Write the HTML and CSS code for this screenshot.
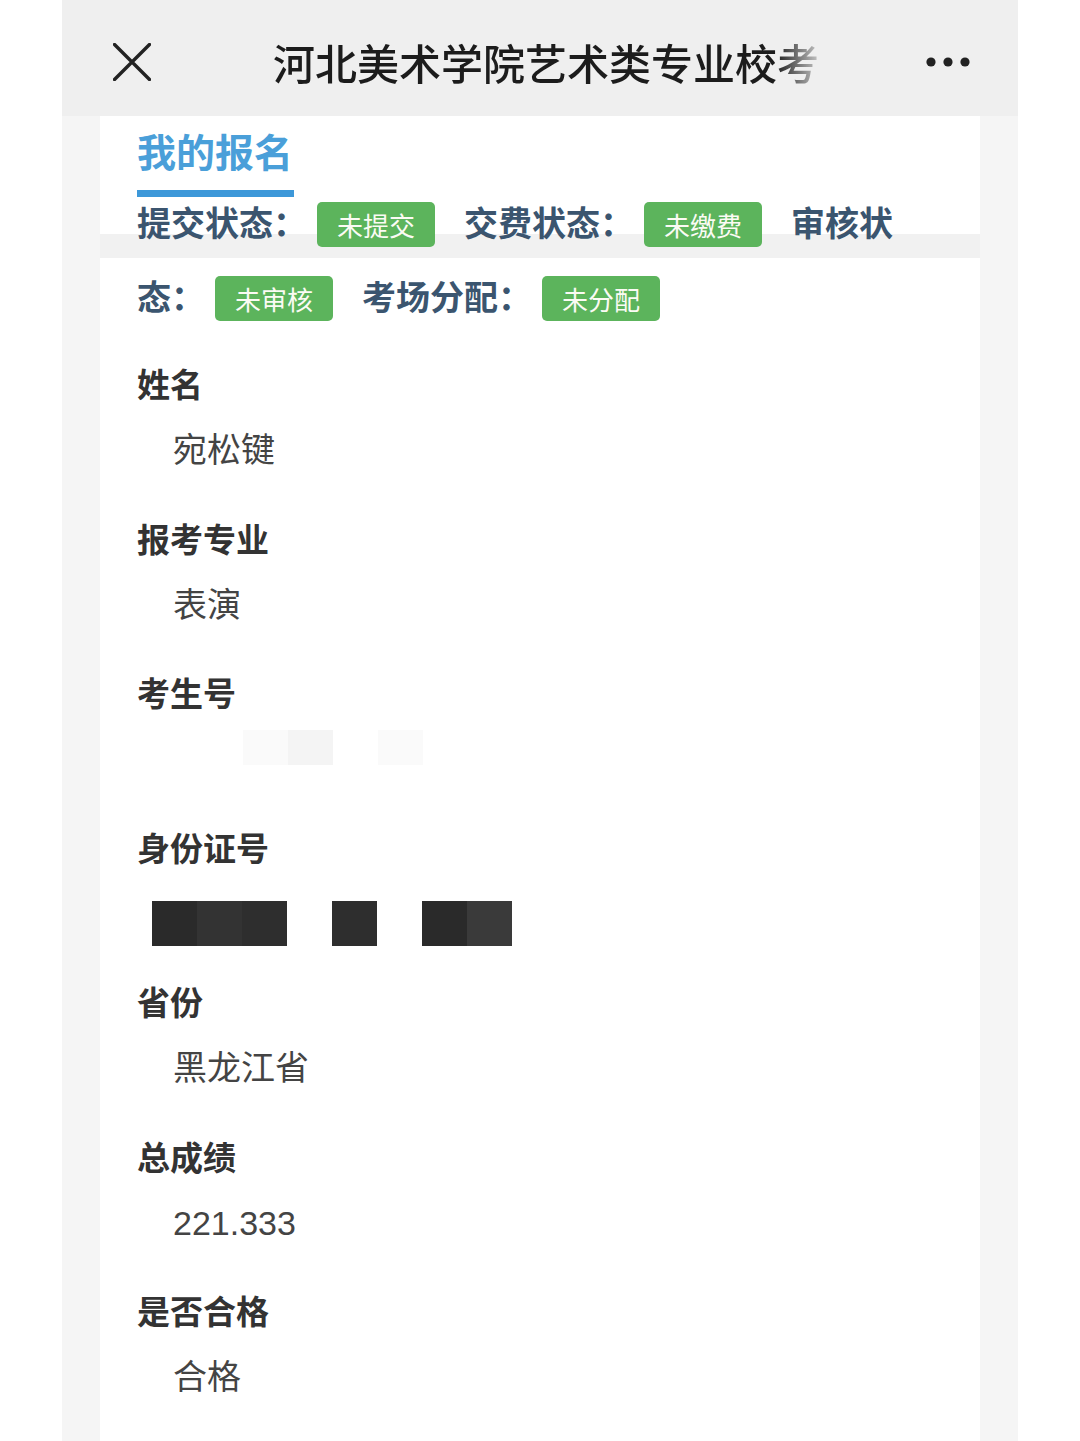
FILE: index.html
```html
<!DOCTYPE html>
<html lang="zh-CN">
<head>
<meta charset="utf-8">
<title>河北美术学院艺术类专业校考</title>
<link rel="stylesheet" href="styles.css">
</head>
<body>
<div class="phone">
  <header class="header">
    <svg class="close" width="38" height="38" viewBox="0 0 38 38" aria-hidden="true">
      <path d="M1.5 1.5 L36.5 36.5 M36.5 1.5 L1.5 36.5" stroke="#222" stroke-width="3.4" stroke-linecap="round" fill="none"/>
    </svg>
    <div class="title">河北美术学院艺术类专业校考</div>
    <svg class="more" width="44" height="10" viewBox="0 0 44 10" aria-hidden="true">
      <circle cx="5" cy="5" r="4.6" fill="#222"/>
      <circle cx="22" cy="5" r="4.6" fill="#222"/>
      <circle cx="39" cy="5" r="4.6" fill="#222"/>
    </svg>
  </header>
  <main class="panel">
    <div class="tab">我的报名</div>
    <div class="status">提交状态：<span class="badge">未提交</span>交费状态：<span class="badge">未缴费</span>审核状态：<span class="badge">未审核</span>考场分配：<span class="badge">未分配</span></div>
    <div class="fields">
      <div class="field">
        <div class="label">姓名</div>
        <div class="value">宛松键</div>
      </div>
      <div class="field">
        <div class="label">报考专业</div>
        <div class="value">表演</div>
      </div>
      <div class="field">
        <div class="label">考生号</div>
        <div class="value blur-row">
          <span class="blk faint1"></span><span class="blk faint2"></span><span class="blk gap"></span><span class="blk faint1"></span>
        </div>
      </div>
      <div class="field">
        <div class="label">身份证号</div>
        <div class="value id-row">
          <span class="sq c1"></span><span class="sq c2"></span><span class="sq c3"></span><span class="sq gap"></span><span class="sq c3"></span><span class="sq gap"></span><span class="sq c1"></span><span class="sq c4"></span>
        </div>
      </div>
      <div class="field">
        <div class="label">省份</div>
        <div class="value">黑龙江省</div>
      </div>
      <div class="field">
        <div class="label">总成绩</div>
        <div class="value">221.333</div>
      </div>
      <div class="field">
        <div class="label">是否合格</div>
        <div class="value">合格</div>
      </div>
    </div>
  </main>
</div>
</body>
</html>
```
FILE: styles.css
```css
* { box-sizing: border-box; }
html, body { margin: 0; padding: 0; }
body {
  background: #ffffff;
  font-family: "Liberation Sans", "Noto Sans CJK SC", sans-serif;
  overflow: hidden;
}
.phone {
  margin: 0 62px;
  width: 956px;
  min-height: 1441px;
  background: #f5f5f5;
}
.header {
  height: 116px;
  background: #efefef;
  display: flex;
  align-items: center;
  padding-top: 7px;
  padding-left: 51px;
  padding-right: 48px;
}
.close { flex: none; display: block; }
.title {
  margin-left: 122px;
  width: 550px;
  font-family: "Noto Sans CJK SC", sans-serif;
  font-size: 42px;
  font-weight: 500;
  color: #1c1c1c;
  line-height: 56px;
  white-space: nowrap;
  overflow: hidden;
  -webkit-mask-image: linear-gradient(to right, #000 0, #000 calc(100% - 48px), rgba(0,0,0,0.12) 100%);
  mask-image: linear-gradient(to right, #000 0, #000 calc(100% - 48px), rgba(0,0,0,0.12) 100%);
}
.more { margin-left: auto; display: block; flex: none; }
.panel {
  margin: 0 38px;
  min-height: 1325px;
  background: linear-gradient(to bottom, #fff 0, #fff 118px, #f1f1f1 118px, #f1f1f1 142px, #fff 142px);
  padding: 9px 65px 0 37px;
}
.tab {
  display: inline-block;
  font-family: "Noto Sans CJK SC", sans-serif;
  font-size: 39px;
  font-weight: 700;
  line-height: 50px;
  color: #4a9fd9;
  padding-bottom: 15px;
  border-bottom: 7px solid #3d98d9;
  padding-right: 1px;
}
.status {
  margin-top: -12px;
  font-family: "Noto Sans CJK SC", sans-serif;
  font-size: 34px;
  font-weight: 700;
  line-height: 74px;
  color: #3b556f;
}
.badge {
  display: inline-block;
  height: 45px;
  line-height: 45px;
  padding: 0 20px;
  margin: 0 29px 0 10px;
  border-radius: 5px;
  background: #5cb45c;
  color: #fbfbf4;
  font-size: 26px;
  font-weight: 400;
  vertical-align: middle;
  position: relative;
  top: -2px;
}
.fields { margin-top: 17px; }
.field { padding-bottom: 20.5px; }
.label {
  font-family: "Noto Sans CJK SC", sans-serif;
  font-size: 33px;
  font-weight: 700;
  line-height: 67px;
  color: #333333;
}
.value {
  height: 67px;
  font-size: 34px;
  line-height: 67px;
  color: #444444;
  padding-left: 36px;
}
.blur-row {
  display: flex;
  padding-left: 106px;
  padding-top: 4px;
}
.blk { display: block; width: 45px; height: 35px; }
.faint1 { background: #fafafa; }
.faint2 { background: #f4f4f4; }
.id-row {
  display: flex;
  padding-left: 15px;
  padding-top: 20px;
}
.sq { display: block; width: 45px; height: 45px; }
.c1 { background: #2a2a2a; }
.c2 { background: #333333; }
.c3 { background: #2e2e2e; }
.c4 { background: #3a3a3a; }
.gap { background: transparent; }
```
